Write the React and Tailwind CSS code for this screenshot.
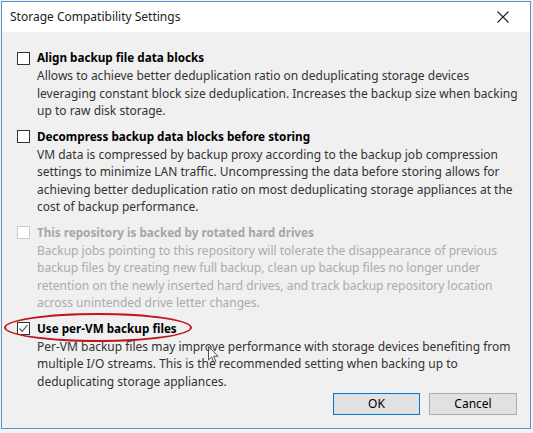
import React from "react";

const font = { fontFamily: '"Noto Sans", "Open Sans", sans-serif' };

function Box({ checked, disabled }) {
  return (
    <div
      className={`w-[13px] h-[13px] shrink-0 bg-white border flex items-center justify-center ${
        disabled ? "border-[#cccccc]" : "border-[#333333]"
      }`}
    >
      {checked && (
        <svg width="11" height="11" viewBox="0 0 11 11">
          <path d="M1.5 5.5 L4.2 8.3 L9.5 2.2" fill="none" stroke="#4a5a70" strokeWidth="1.2" />
        </svg>
      )}
    </div>
  );
}

function Section({ title, lines, checked, disabled }) {
  return (
    <div className="flex flex-col">
      <div className="flex items-center gap-[7px] h-[18px]">
        <Box checked={checked} disabled={disabled} />
        <span className={`font-bold text-[11.7px] ${disabled ? "text-[#a6a6a6]" : "text-black"}`}>{title}</span>
      </div>
      <div className={`pl-[20px] text-[12px] leading-[17.5px] ${disabled ? "text-[#ababab]" : "text-[#333333]"}`}>
        {lines.map((l, i) => (
          <div key={i} className="whitespace-nowrap">{l}</div>
        ))}
      </div>
    </div>
  );
}

export default function App() {
  return (
    <div className="w-[533px] h-[433px] bg-[#f3f3f3] pt-px pl-px" style={font}>
      <div className="w-[530px] h-[428px] border border-[#5a8fcf] flex flex-col bg-[#f0f0f0] relative">
        {/* title bar */}
        <div className="h-[30px] bg-white flex items-center justify-between pl-[8px] pr-[21px] shrink-0">
          <span className="text-[12px] text-[#222222]">Storage Compatibility Settings</span>
          <svg width="12" height="12" viewBox="0 0 12 12">
            <path d="M0.5 0.5 L11.5 11.5 M11.5 0.5 L0.5 11.5" stroke="#222" strokeWidth="1.1" />
          </svg>
        </div>

        <div className="flex flex-col gap-[8px] pl-[15px] pt-[17px]">
          <Section
            title="Align backup file data blocks"
            lines={[
              "Allows to achieve better deduplication ratio on deduplicating storage devices",
              "leveraging constant block size deduplication. Increases the backup size when backing",
              "up to raw disk storage.",
            ]}
          />
          <Section
            title="Decompress backup data blocks before storing"
            lines={[
              "VM data is compressed by backup proxy according to the backup job compression",
              "settings to minimize LAN traffic. Uncompressing the data before storing allows for",
              "achieving better deduplication ratio on most deduplicating storage appliances at the",
              "cost of backup performance.",
            ]}
          />
          <Section
            disabled
            title="This repository is backed by rotated hard drives"
            lines={[
              "Backup jobs pointing to this repository will tolerate the disappearance of previous",
              "backup files by creating new full backup, clean up backup files no longer under",
              "retention on the newly inserted hard drives, and track backup repository location",
              "across unintended drive letter changes.",
            ]}
          />
          <Section
            checked
            title="Use per-VM backup files"
            lines={[
              "Per-VM backup files may improve performance with storage devices benefiting from",
              "multiple I/O streams. This is the recommended setting when backing up to",
              "deduplicating storage appliances.",
            ]}
          />
        </div>

        <div className="flex justify-end gap-[9px] pr-[13px] mt-auto mb-[13px]">
          <button className="w-[87px] h-[22px] bg-[#e1e1e1] border border-[#0078d7] text-[12px] text-black">
            OK
          </button>
          <button className="w-[88px] h-[22px] bg-[#e1e1e1] border border-[#adadad] text-[12px] text-black">
            Cancel
          </button>
        </div>

        {/* annotation ellipse */}
        <div className="absolute left-[2px] top-[311px] w-[188px] h-[29px] rounded-[50%] border-[2.5px] border-[#c0161d]" />
        {/* mouse cursor */}
        <svg className="absolute left-[206px] top-[344px]" width="12" height="18" viewBox="0 0 12 18">
          <path d="M0.5 0.5 L0.5 14 L3.6 11 L6 16.5 L8 15.6 L5.6 10.3 L10 10.3 Z" fill="white" fillOpacity="0.6" stroke="#555" strokeWidth="1" />
        </svg>
      </div>
    </div>
  );
}
